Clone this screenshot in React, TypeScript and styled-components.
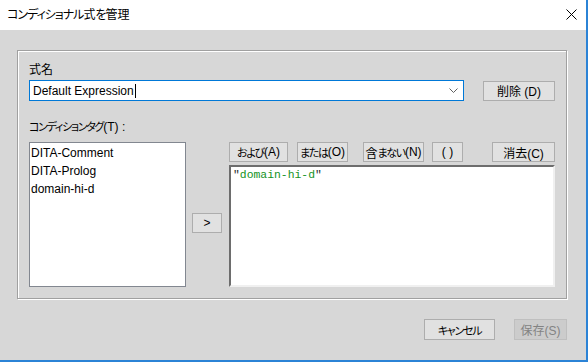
import { ReactNode } from 'react';
import styled, { createGlobalStyle } from 'styled-components';

const GlobalStyle = createGlobalStyle`
  html, body {
    margin: 0;
    padding: 0;
    background: #d7d7d7;
  }
  body {
    font-family: "Liberation Sans", "Noto Sans CJK JP", sans-serif;
    font-size: 12px;
    color: #000;
    font-feature-settings: "palt";
  }
`;

// the dialog font has narrow kana, so kana runs are set a little tighter
const jp = (text: string, title = false): ReactNode[] =>
  text.split(/([\u3040-\u30ff]+)/).map((part, i) =>
    /[\u3040-\u30ff]/.test(part) ? <Kana key={i} $title={title}>{part}</Kana> : part
  );

const tags = ['DITA-Comment', 'DITA-Prolog', 'domain-hi-d'];

const operators = [
  { label: 'および(A)', w: 59, ml: 0 },
  { label: 'または(O)', w: 51, ml: 9 },
  { label: '含まない(N)', w: 61, ml: 15 },
  { label: '( )', w: 31, ml: 8 },
];

export default function App() {
  return (
    <>
      <GlobalStyle />
      <Window>
        <TitleBar>
          <Title>{jp('コンディショナル式を管理', true)}</Title>
          <CloseBox>
            <svg width="11" height="11" viewBox="0 0 11 11">
              <path d="M0.5 0.5 L10.5 10.5 M10.5 0.5 L0.5 10.5" stroke="#000" strokeWidth="1" />
            </svg>
          </CloseBox>
        </TitleBar>

        <Body>
          <GroupBox>
            <FieldLabel>式名</FieldLabel>
            <InputRow>
              <Combo>
                <ComboText>Default Expression</ComboText>
                <Caret />
                <Chevron>
                  <svg width="9" height="5" viewBox="0 0 9 5">
                    <path d="M0.5 0.5 L4.5 4.5 L8.5 0.5" stroke="#606060" strokeWidth="1" fill="none" />
                  </svg>
                </Chevron>
              </Combo>
              <Button $w={72} $ml="auto">削除 (D)</Button>
            </InputRow>

            <FieldLabel $top={18} $bottom={7}>{jp('コンディションタグ(T) :')}</FieldLabel>
            <MainRow>
              <TagList>
                {tags.map(t => (
                  <TagItem key={t}>{t}</TagItem>
                ))}
              </TagList>
              <MoveColumn>
                <Button $w={30}>&gt;</Button>
              </MoveColumn>
              <ExprColumn>
                <OperatorRow>
                  {operators.map(op => (
                    <Button key={op.label} $w={op.w} $ml={`${op.ml}px`}>{jp(op.label)}</Button>
                  ))}
                  <Button $w={63} $ml="auto">消去(C)</Button>
                </OperatorRow>
                <ExprArea>
                  <Quote>"</Quote><Token>domain-hi-d</Token><Quote>"</Quote>
                </ExprArea>
              </ExprColumn>
            </MainRow>
          </GroupBox>

          <Footer>
            <Button $w={71} $h={21}>{jp('キャンセル')}</Button>
            <Button $w={53} $h={21} disabled>保存(S)</Button>
          </Footer>
        </Body>
      </Window>
    </>
  );
}

const Kana = styled.span<{ $title: boolean }>`
  font-size: ${p => (p.$title ? 12 : 11)}px;
  letter-spacing: ${p => (p.$title ? -1 : -1.3)}px;
`;

const Window = styled.div`
  width: 588px;
  height: 362px;
  box-sizing: border-box;
  border-right: 2px solid #2b83d6;
  border-bottom: 2px solid #2b83d6;
  background: #d7d7d7;
  display: flex;
  flex-direction: column;
  overflow: hidden;
`;

const TitleBar = styled.div`
  height: 30px;
  flex-shrink: 0;
  background: #ffffff;
  display: flex;
  align-items: center;
  justify-content: space-between;
  padding-left: 7px;
`;

const Title = styled.div`
  font-size: 12px;
  line-height: 16px;
  color: #000;
`;

const CloseBox = styled.div`
  width: 30px;
  height: 30px;
  display: flex;
  align-items: center;
  justify-content: center;
  margin-top: -1px;
`;

const Body = styled.div`
  flex: 1;
  display: flex;
  flex-direction: column;
  padding: 20px 19px 0 17px;
`;

const GroupBox = styled.div`
  border: 1px solid #a0a0a0;
  box-shadow: inset 1px 1px 0 #ffffff, 1px 1px 0 #ffffff;
  padding: 11px;
  display: flex;
  flex-direction: column;
`;

const FieldLabel = styled.div<{ $top?: number; $bottom?: number }>`
  line-height: 16px;
  height: 16px;
  margin-top: ${p => p.$top ?? 0}px;
  margin-bottom: ${p => p.$bottom ?? 2}px;
`;

const InputRow = styled.div`
  display: flex;
  align-items: center;
  height: 21px;
`;

const Combo = styled.div`
  width: 435px;
  height: 21px;
  box-sizing: border-box;
  border: 1px solid #0078d7;
  background: #ffffff;
  display: flex;
  align-items: center;
  padding-left: 3px;
`;

const ComboText = styled.span`
  line-height: 16px;
`;

const Caret = styled.span`
  width: 1px;
  height: 14px;
  background: #000;
  margin-left: 1px;
`;

const Chevron = styled.span`
  margin-left: auto;
  margin-right: 5px;
  display: flex;
  align-items: center;
`;

const Button = styled.button<{ $w: number; $h?: number; $ml?: string }>`
  width: ${p => p.$w}px;
  height: ${p => p.$h ?? 20}px;
  margin-left: ${p => p.$ml ?? '0'};
  flex-shrink: 0;
  box-sizing: border-box;
  padding: 0;
  background: #e1e1e1;
  border: 1px solid #adadad;
  border-radius: 0;
  font-family: inherit;
  font-size: 12px;
  font-feature-settings: "palt";
  color: #000;
  display: flex;
  align-items: center;
  justify-content: center;
  white-space: nowrap;

  &:disabled {
    background: #cccccc;
    border-color: #bfbfbf;
    color: #838383;
  }
`;

const MainRow = styled.div`
  display: flex;
  height: 145px;
`;

const TagList = styled.div`
  width: 157px;
  box-sizing: border-box;
  border: 1px solid #828790;
  background: #ffffff;
  padding: 1px 1px;
`;

const TagItem = styled.div`
  line-height: 18px;
  height: 18px;
  white-space: nowrap;
`;

const MoveColumn = styled.div`
  padding: 71px 7px 0 6px;
`;

const ExprColumn = styled.div`
  flex: 1;
  display: flex;
  flex-direction: column;
`;

const OperatorRow = styled.div`
  display: flex;
  height: 20px;
`;

const ExprArea = styled.div`
  flex: 1;
  margin-top: 3px;
  background: #ffffff;
  border: 2px solid;
  border-color: #6d6d6d #f0f0f0 #f0f0f0 #6d6d6d;
  padding: 1px 2px;
  font-family: "Liberation Mono", monospace;
  font-size: 11.4px;
  line-height: 14px;
`;

const Quote = styled.span`
  color: #2a2a2a;
`;

const Token = styled.span`
  color: #14931e;
`;

const Footer = styled.div`
  display: flex;
  justify-content: flex-end;
  gap: 19px;
  margin-top: 20px;
`;
